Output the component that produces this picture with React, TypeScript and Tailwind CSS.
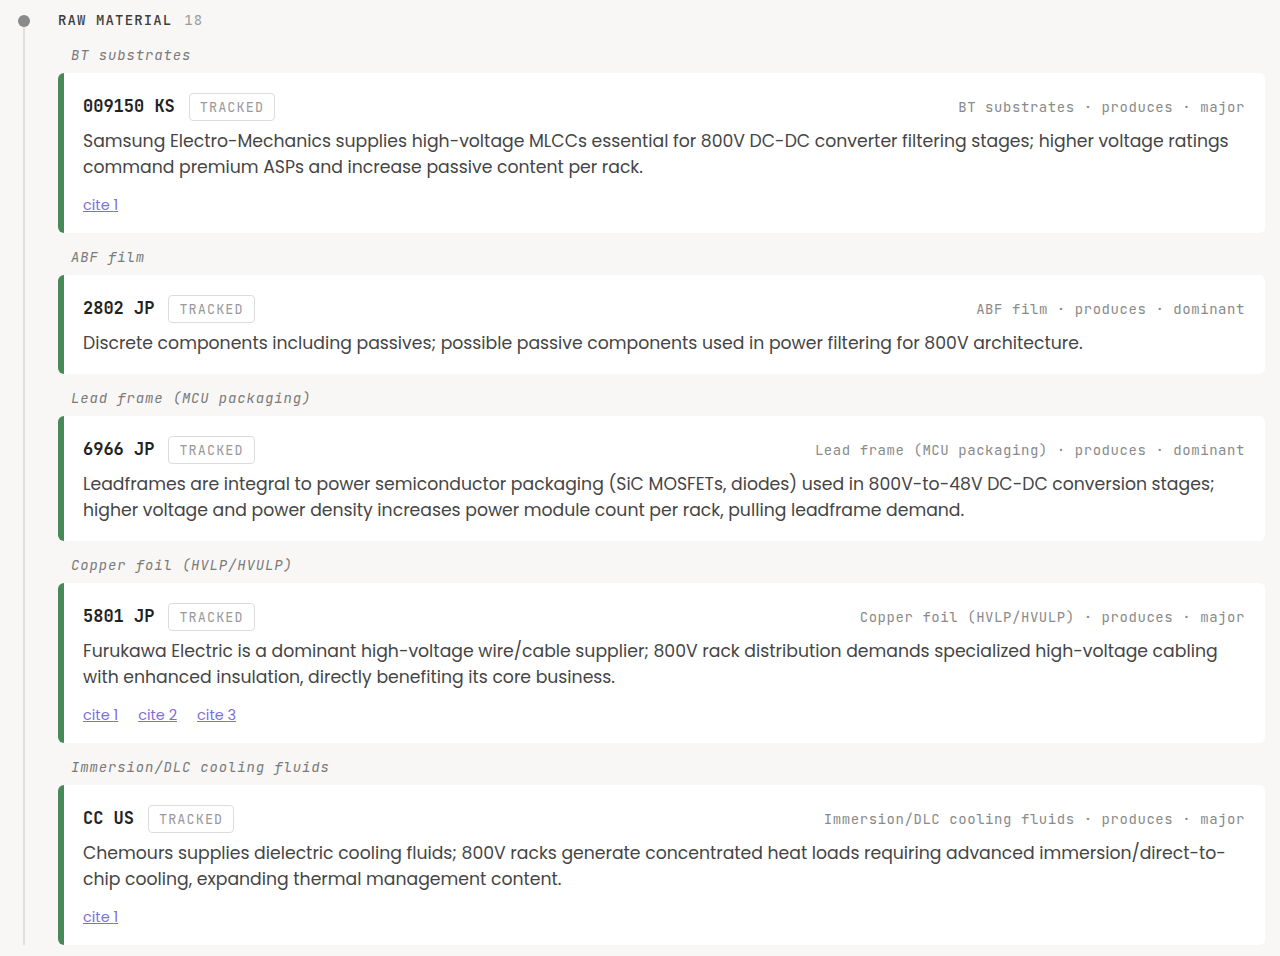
import React from "react";

type Item = {
  label: string;
  ticker: string;
  relation: string;
  strength: string;
  text: string;
  cites: number;
};

const items: Item[] = [
  {
    label: "BT substrates",
    ticker: "009150 KS",
    relation: "produces",
    strength: "major",
    text: "Samsung Electro-Mechanics supplies high-voltage MLCCs essential for 800V DC-DC converter filtering stages; higher voltage ratings command premium ASPs and increase passive content per rack.",
    cites: 1,
  },
  {
    label: "ABF film",
    ticker: "2802 JP",
    relation: "produces",
    strength: "dominant",
    text: "Discrete components including passives; possible passive components used in power filtering for 800V architecture.",
    cites: 0,
  },
  {
    label: "Lead frame (MCU packaging)",
    ticker: "6966 JP",
    relation: "produces",
    strength: "dominant",
    text: "Leadframes are integral to power semiconductor packaging (SiC MOSFETs, diodes) used in 800V-to-48V DC-DC conversion stages; higher voltage and power density increases power module count per rack, pulling leadframe demand.",
    cites: 0,
  },
  {
    label: "Copper foil (HVLP/HVULP)",
    ticker: "5801 JP",
    relation: "produces",
    strength: "major",
    text: "Furukawa Electric is a dominant high-voltage wire/cable supplier; 800V rack distribution demands specialized high-voltage cabling with enhanced insulation, directly benefiting its core business.",
    cites: 3,
  },
  {
    label: "Immersion/DLC cooling fluids",
    ticker: "CC US",
    relation: "produces",
    strength: "major",
    text: "Chemours supplies dielectric cooling fluids; 800V racks generate concentrated heat loads requiring advanced immersion/direct-to-chip cooling, expanding thermal management content.",
    cites: 1,
  },
];

const mono = "font-['JetBrains_Mono','DejaVu_Sans_Mono',monospace]";

function Card({ item }: { item: Item }) {
  return (
    <div className="rounded-md border-l-[6px] border-[#468a5a] bg-white pl-[19px] pr-5 pt-5 pb-[18px]">
      <div className="flex h-7 items-center">
        <span className={`${mono} text-[17px] font-bold text-[#222]`}>{item.ticker}</span>
        <span
          className={`${mono} ml-[14px] flex h-7 items-center rounded border border-[#dcdcdc] px-[10px] text-[13.5px] tracking-[0.08em] text-[#9a9a9a]`}
        >
          TRACKED
        </span>
        <span className={`${mono} ml-auto text-[14px] tracking-[0.04em] text-[#8a8a8a]`}>
          {item.label} · {item.relation} · {item.strength}
        </span>
      </div>
      <p className="mt-[7px] font-['Poppins','Open_Sans',sans-serif] text-[17.25px] leading-[26px] text-[#454545]">
        {item.text}
      </p>
      {item.cites > 0 && (
        <div className="mt-[15px] flex gap-5 font-['Poppins','Open_Sans',sans-serif] text-[14.5px] leading-[20px]">
          {Array.from({ length: item.cites }, (_, i) => (
            <a key={i} href="#" className="text-[#7b6fd8] underline">
              cite {i + 1}
            </a>
          ))}
        </div>
      )}
    </div>
  );
}

export default function App() {
  return (
    <div className="min-h-[956px] bg-[#f8f7f5] pr-[15px]">
      <div className="flex">
        <div className="relative w-[58px] shrink-0">
          <div className="absolute left-[23px] top-[21px] bottom-0 w-[2px] bg-[#e3e0db]" />
          <div className="absolute left-[18px] top-[15px] h-3 w-3 rounded-full bg-[#8a8a8a]" />
        </div>
        <div className="flex-1">
          <div className={`${mono} flex h-[40px] items-center gap-3 text-[14px] tracking-[0.08em]`}>
            <span className="font-medium text-[#3c3c3c]">RAW MATERIAL</span>
            <span className="text-[#9a9a9a]">18</span>
          </div>
          {items.map((item, idx) => (
            <div key={idx}>
              <div
                className={`${mono} flex items-start pl-[13px] text-[14px] italic tracking-[0.06em] text-[#7a7a7a] ${idx > 0 ? "h-[42px] pt-[14px]" : "h-[33px] pt-[5px]"}`}
              >
                {item.label}
              </div>
              <Card item={item} />
            </div>
          ))}
        </div>
      </div>
    </div>
  );
}
